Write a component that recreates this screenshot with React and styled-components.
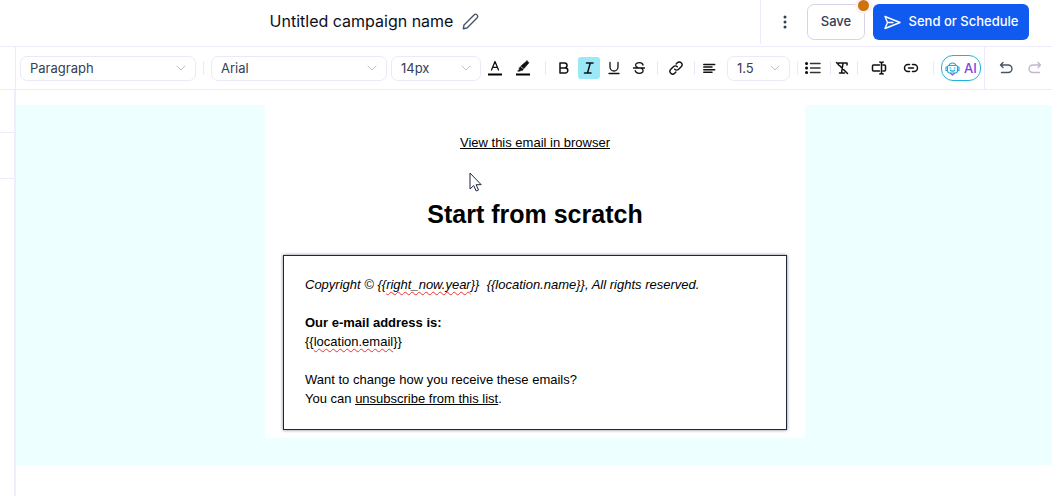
import React from 'react';
import styled, { createGlobalStyle } from 'styled-components';

const GlobalStyle = createGlobalStyle`
  * {
    box-sizing: border-box;
  }
  body {
    margin: 0;
    background: #fff;
    color: #101828;
    font-family: Inter, 'Liberation Sans', sans-serif;
    font-size: 13px;
  }
  button,
  select {
    font: inherit;
    color: inherit;
  }
  p,
  h1,
  h2 {
    margin: 0;
  }
`;

const Page = styled.div`
  display: flex;
  flex-direction: column;
  min-height: 100vh;
`;

const Header = styled.header`
  display: flex;
  height: 47px;
  border-bottom: 1px solid #efebfd;
`;
const TitleArea = styled.div`
  flex: 1;
  display: flex;
  align-items: center;
  justify-content: center;
  gap: 9px;
  padding: 0 11px 4px 0;
`;
const Title = styled.h1`
  font-size: 16px;
  line-height: 20px;
  font-weight: 400;
  color: #0b0f19;
`;
const IconButton = styled.button`
  display: flex;
  align-items: center;
  justify-content: center;
  padding: 0;
  border: 0;
  background: none;
  color: #475467;
`;
const Actions = styled.div`
  display: flex;
  align-items: flex-start;
  height: 44px;
  padding: 4px 23px 0 14px;
  border-left: 1px solid #efebfd;
`;
const MenuButton = styled(IconButton)`
  width: 20px;
  height: 36px;
  margin-right: 12px;
`;
const SaveButton = styled.button`
  position: relative;
  width: 58px;
  height: 36px;
  margin-right: 8px;
  padding: 0 0 3px;
  border: 1px solid #d9d3e8;
  border-radius: 7px;
  background: #fff;
  color: #344054;
  font-weight: 500;
`;
const UnsavedDot = styled.span`
  position: absolute;
  top: -5px;
  right: -5px;
  width: 11px;
  height: 11px;
  border-radius: 50%;
  background: #cc730b;
  box-shadow: 0 0 0 3px #fef1f1;
`;
const SendButton = styled.button`
  display: flex;
  align-items: center;
  justify-content: center;
  gap: 8px;
  width: 156px;
  height: 36px;
  padding: 0 0 3px;
  border: 0;
  border-radius: 6px;
  background: #115af0;
  color: #fff;
  font-weight: 500;
  white-space: nowrap;
  svg {
    margin-top: 3px;
  }
`;

const Main = styled.div`
  flex: 1;
  display: flex;
`;
const Rail = styled.div`
  width: 16px;
  display: flex;
  flex-direction: column;
`;
const RailHead = styled.div`
  height: 43px;
  border-bottom: 1px solid #efebfd;
  border-right: 1px solid #efebfd;
`;
const RailCell = styled.div`
  height: ${props => props.$height || 'auto'};
  flex: ${props => (props.$height ? 'none' : 1)};
  border-bottom: ${props => (props.$height ? '1px solid #efebfd' : 'none')};
  border-right: 2px solid #f0ecfe;
`;
const Content = styled.div`
  flex: 1;
  min-width: 0;
`;

const Toolbar = styled.div`
  display: flex;
  align-items: center;
  height: 43px;
  padding-left: 4px;
  border-bottom: 1px solid #efebfd;
`;
const Divider = styled.span`
  flex: none;
  width: 1px;
  height: 14px;
  margin-left: ${props => (props.$before === undefined ? 7 : props.$before)}px;
  margin-right: ${props => (props.$after === undefined ? 7 : props.$after)}px;
  background: #ece8fb;
`;
const SelectBox = styled.label`
  display: grid;
  flex: 0 1 ${props => props.$width}px;
  align-items: center;
  height: 25px;
  margin-right: ${props => props.$gap || 0}px;
  border: 1px solid #ece8fa;
  border-radius: 7px;
  select,
  svg {
    grid-area: 1 / 1;
  }
  select {
    width: 100%;
    height: 23px;
    padding: 0 24px 1px 9px;
    border: 0;
    background: none;
    color: #344054;
    appearance: none;
  }
  svg {
    justify-self: end;
    margin-right: 9px;
    color: #c4bccf;
    pointer-events: none;
  }
`;
const Tools = styled.div`
  display: flex;
  gap: ${props => props.$gap || 0}px;
  margin-left: ${props => props.$before || 0}px;
  margin-right: ${props => props.$after || 0}px;
`;
const Tool = styled(IconButton)`
  width: 22px;
  height: 22px;
  border-radius: 3px;
  color: ${props => props.$color || '#111'};
  background: ${props => (props.$active ? '#9be8f8' : 'none')};
`;
const AiButton = styled.button`
  display: flex;
  align-items: center;
  justify-content: center;
  gap: 4px;
  width: 40px;
  height: 26px;
  padding: 0;
  border: 1px solid #1fb2e0;
  border-radius: 12px;
  background: #fff;
  color: #8145dc;
  font-weight: 500;
`;
const History = styled.div`
  display: flex;
  align-items: center;
  gap: 7px;
  height: 42px;
  margin-left: auto;
  padding: 0 6px 0 10px;
  border-left: 1px solid #efebfd;
`;

const Canvas = styled.main`
  margin-top: 15px;
  padding: 0 15px 27px 17px;
  background: #edffff;
`;
const Email = styled.article`
  position: relative;
  max-width: 540px;
  margin: 0 auto;
  padding: 28px 18px 8px;
  background: #fff;
  color: #000;
  font-family: 'Liberation Sans', Arial, sans-serif;
  line-height: 19px;
`;
const BrowserLink = styled.p`
  text-align: center;
`;
const Link = styled.a`
  color: inherit;
  text-decoration: underline;
`;
const Heading = styled.h2`
  margin: 46px 0 25px;
  font-size: 25px;
  line-height: 32px;
  text-align: center;
`;
const Footer = styled.section`
  padding: 19px 21px 21px;
  border: 1px solid #1d2740;
  box-shadow: 0 0 3px rgba(29, 39, 64, 0.6);
  p + p {
    margin-top: 19px;
  }
`;
const Misspelled = styled.span`
  text-decoration: underline wavy #f03030 1px;
  text-decoration-skip-ink: none;
  text-underline-offset: 2px;
`;
const Pointer = styled.svg`
  position: absolute;
  top: 67px;
  left: 204px;
`;

const Icon = ({ width = 16, height = 16, children, stroke = 1.5 }) => (
  <svg
    width={width}
    height={height}
    viewBox={`0 0 ${width} ${height}`}
    fill="none"
    stroke="currentColor"
    strokeWidth={stroke}
    strokeLinecap="round"
    strokeLinejoin="round"
    aria-hidden="true"
  >
    {children}
  </svg>
);

const Select = ({ label, value, width, gap }) => (
  <SelectBox $width={width} $gap={gap}>
    <select aria-label={label} defaultValue={value}>
      <option>{value}</option>
    </select>
    <Icon width={10} height={6} stroke={1}>
      <path d="M1 1l4 4 4-4" />
    </Icon>
  </SelectBox>
);

const TextColorIcon = () => (
  <Icon>
    <path d="M4.500 10L8 1.500 11.500 10M5.600 7.300h4.800" strokeWidth="1.300" />
    <path d="M1 14.500h14" stroke="#000" strokeWidth="2" strokeLinecap="butt" />
  </Icon>
);

const HighlightIcon = () => (
  <Icon>
    <path
      d="M12 .8l2 2-5.200 6-3-2.700L12 .8zM5.300 6.800l3 2.600-1 1.200-1.300-.3-.8.900H2.600l1.700-2-.2-.9z"
      fill="#111"
      strokeWidth=".500"
    />
    <path d="M1 14.500h14" stroke="#000" strokeWidth="2" strokeLinecap="butt" />
  </Icon>
);

const RobotIcon = () => (
  <Icon width={15} height={15} stroke={1.1}>
    <g stroke="#1aa9dc">
      <path d="M4 4.500C4.500 2.800 5.800 2 7.500 2s3 .8 3.500 2.500M2.500 6H1v3.500h1.500M12.500 6H14v3.500h-1.500" />
      <path d="M4 4.500h7a1.500 1.500 0 011.500 1.500v3.500c0 1.500-1 2.500-2.500 2.500H5c-1.500 0-2.500-1-2.500-2.500V6A1.500 1.500 0 014 4.500z" />
      <path d="M5 7h.8M9.200 7h.8M5.300 9.200c1.100.9 3.300.9 4.400 0" />
    </g>
    <path d="M5.500 12.300l2 1.900 2-1.900" stroke="#8a4be0" />
  </Icon>
);

const App = () => (
  <Page>
    <GlobalStyle />
    <Header>
      <TitleArea>
        <Title>Untitled campaign name</Title>
        <IconButton aria-label="Rename campaign">
          <Icon width={17} height={17} stroke={1.4}>
            <path d="M1.300 15.700l.7-3.700L12 1.900c1-1 2.100-1 3 0s.9 2 0 3L5 15l-3.700.7z" />
          </Icon>
        </IconButton>
      </TitleArea>
      <Actions>
        <MenuButton aria-label="More options">
          <svg width="4" height="14" viewBox="0 0 4 14" fill="#344054">
            <circle cx="2" cy="2" r="1.500" />
            <circle cx="2" cy="7" r="1.500" />
            <circle cx="2" cy="12" r="1.500" />
          </svg>
        </MenuButton>
        <SaveButton>
          Save
          <UnsavedDot />
        </SaveButton>
        <SendButton>
          <Icon width={17} height={15} stroke={1.4}>
            <path d="M1 1.500L16 7.500l-15 6L3.500 7.500zM3.500 7.500h5.500" />
          </Icon>
          Send or Schedule
        </SendButton>
      </Actions>
    </Header>
    <Main>
      <Rail>
        <RailHead />
        <RailCell $height="43px" />
        <RailCell $height="46px" />
        <RailCell />
      </Rail>
      <Content>
        <Toolbar>
          <Select label="Block type" value="Paragraph" width={176} />
          <Divider />
          <Select label="Font family" value="Arial" width={176} gap={4} />
          <Select label="Font size" value="14px" width={90} />
          <Tools $gap={6} $before={3}>
            <Tool aria-label="Text color">
              <TextColorIcon />
            </Tool>
            <Tool aria-label="Highlight color">
              <HighlightIcon />
            </Tool>
          </Tools>
          <Divider $before={11} />
          <Tools $gap={3}>
            <Tool aria-label="Bold">
              <Icon>
                <path d="M4 3h4.500a2.500 2.500 0 010 5H4zM4 8h5.300a2.500 2.500 0 010 5H4z" />
              </Icon>
            </Tool>
            <Tool aria-label="Italic" $active>
              <Icon>
                <path d="M5.500 3h6.500M3.500 13H10M9.300 3L6.500 13" />
              </Icon>
            </Tool>
            <Tool aria-label="Underline">
              <Icon stroke={1.3}>
                <path d="M4 2.500v4.500a4 4 0 008 0V2.500M3 13.500h10" />
              </Icon>
            </Tool>
            <Tool aria-label="Strikethrough">
              <Icon stroke={1.3}>
                <path d="M12 5c-.3-1.500-1.700-2.300-3.600-2.300-2.200 0-3.800.9-3.800 2.500 0 1.300 1 2 2.400 2.500M2.500 8h11M9.800 8.200c1.400.4 2.300 1.200 2.300 2.400 0 1.700-1.600 2.700-3.900 2.700-2.100 0-3.700-.9-4-2.600" />
              </Icon>
            </Tool>
          </Tools>
          <Divider />
          <Tool aria-label="Insert link">
            <Icon stroke={1.4}>
              <path d="M6.700 9.300a2.700 2.700 0 003.900 0l2.600-2.600a2.700 2.700 0 00-3.900-3.900L8.200 3.900M9.300 6.700a2.700 2.700 0 00-3.900 0L2.800 9.300a2.700 2.700 0 003.900 3.900l1.100-1.100" />
            </Icon>
          </Tool>
          <Divider $after={3} />
          <Tools $after={7}>
            <Tool aria-label="Align left">
              <Icon stroke={1.5}>
                <path d="M2.800 4.500h10.900M2.800 7h8.200M2.800 9.700h10.900M2.800 12.300h8.200" />
              </Icon>
            </Tool>
          </Tools>
          <Select label="Line height" value="1.5" width={63} />
          <Divider $after={4} />
          <Tool aria-label="Bulleted list">
            <Icon>
              <path d="M5.500 3.500H15M5.500 8H15M5.500 12.500H15" stroke="#333" />
              <path d="M1.500 3.500h.1M1.500 8h.1M1.500 12.500h.1" strokeWidth="3" />
            </Icon>
          </Tool>
          <Divider $before={6} $after={0} />
          <Tool aria-label="Clear formatting">
            <Icon stroke={1.5}>
              <path d="M4.500 5V3h8.500v2M9 3.500L7.500 13M5.500 13h5M2.500 2.500l11 11" />
            </Icon>
          </Tool>
          <Divider $before={4} $after={10} />
          <Tools $gap={10}>
            <Tool aria-label="Insert field">
              <Icon stroke={1.5}>
                <path d="M8.500 5H2.500a1 1 0 00-1 1v4a1 1 0 001 1h6M12 5h1.500a1 1 0 011 1v4a1 1 0 01-1 1H12M10.500 3v10M8.800 2q1.500 0 1.700 1 .2-1 1.700-1M8.800 14q1.500 0 1.700-1 .2 1 1.700 1" />
              </Icon>
            </Tool>
            <Tool aria-label="Trigger link">
              <Icon stroke={1.5}>
                <path d="M6.500 4.500H5a3.500 3.500 0 000 7h1.500M5.500 8h5M9.500 4.500H11a3.500 3.500 0 010 7H9.500" />
              </Icon>
            </Tool>
          </Tools>
          <Divider $before={11} />
          <AiButton>
            <RobotIcon />
            AI
          </AiButton>
          <History>
            <Tool aria-label="Undo" $color="#475467">
              <Icon stroke={1.4}>
                <path d="M5 2.500L2.500 5 5 7.500M2.500 5h7.700a3.700 3.700 0 010 7.500H3.500" />
              </Icon>
            </Tool>
            <Tool aria-label="Redo" $color="#c3b5cf">
              <Icon stroke={1.4}>
                <path d="M11 2.500L13.500 5 11 7.500M13.500 5H5.800a3.700 3.700 0 000 7.500h6.700" />
              </Icon>
            </Tool>
          </History>
        </Toolbar>
        <Canvas>
          <Email>
            <BrowserLink>
              <Link href="#">View this email in browser</Link>
            </BrowserLink>
            <Heading>Start from scratch</Heading>
            <Footer>
              <p>
                <em>
                  Copyright © {'{{'}
                  <Misspelled>right_now.year</Misspelled>
                  {'}}'}&nbsp; {'{{location.name}}'}, All rights reserved.
                </em>
              </p>
              <p>
                <strong>Our e-mail address is:</strong>
                <br />
                {'{{'}
                <Misspelled>location.email</Misspelled>
                {'}}'}
              </p>
              <p>
                Want to change how you receive these emails?
                <br />
                You can <Link href="#">unsubscribe from this list</Link>.
              </p>
            </Footer>
            <Pointer width="14" height="20" viewBox="0 0 14 20">
              <path
                d="M1 1v16l3.700-3.500L7.200 19l2.300-1-2.400-5.300h5.100z"
                fill="#fff"
                stroke="#1d2740"
              />
            </Pointer>
          </Email>
        </Canvas>
      </Content>
    </Main>
  </Page>
);

export default App;
